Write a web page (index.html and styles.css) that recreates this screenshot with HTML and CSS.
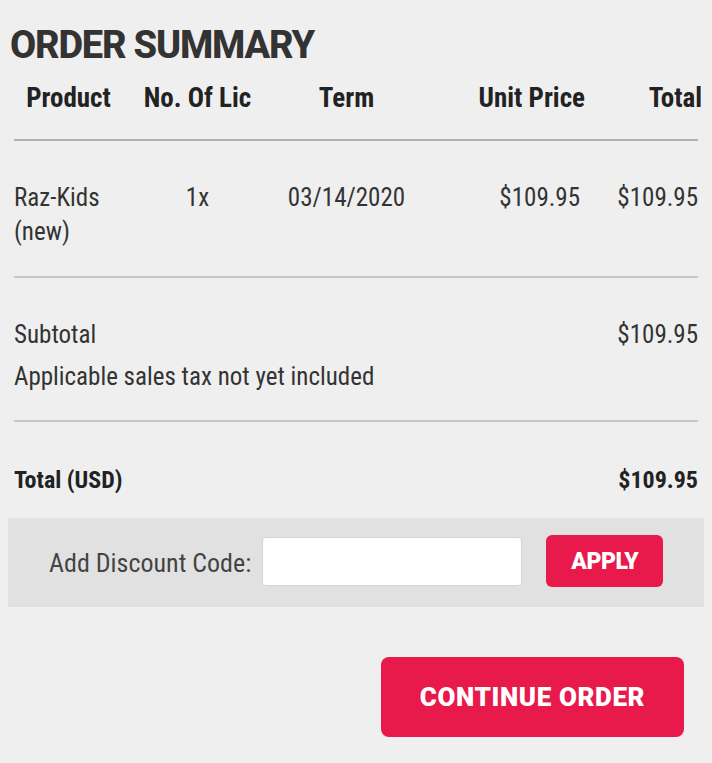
FILE: index.html
```html
<!DOCTYPE html>
<html lang="en">
<head>
<meta charset="utf-8">
<title>Order Summary</title>
<link rel="stylesheet" href="styles.css">
</head>
<body>
<main class="summary">
  <h1 class="title">ORDER SUMMARY</h1>
  <div class="grid head">
    <div class="c1 center">Product</div>
    <div class="c2 center">No. Of Lic</div>
    <div class="c3 center">Term</div>
    <div class="c4 right">Unit Price</div>
    <div class="c5 right total-head">Total</div>
  </div>
  <div class="grid item">
    <div class="c1">Raz-Kids<br>(new)</div>
    <div class="c2 center">1x</div>
    <div class="c3 center">03/14/2020</div>
    <div class="c4 right price">$109.95</div>
    <div class="c5 right">$109.95</div>
  </div>
  <div class="block sub">
    <div class="line"><span>Subtotal</span><span>$109.95</span></div>
    <div class="note">Applicable sales tax not yet included</div>
  </div>
  <div class="block grand">
    <div class="line"><span>Total (USD)</span><span>$109.95</span></div>
  </div>
  <form class="discount">
    <label class="discount-label" for="code">Add Discount Code:</label>
    <input class="discount-input" id="code" type="text">
    <button class="btn btn-apply" type="button">APPLY</button>
  </form>
  <div class="actions">
    <button class="btn btn-continue" type="button">CONTINUE ORDER</button>
  </div>
</main>
</body>
</html>
```
FILE: styles.css
```css
html, body {
  margin: 0;
  padding: 0;
  background: #f0eff0;
}
body {
  font-family: Roboto, "Liberation Sans", sans-serif;
  font-stretch: 75%;
  color: #333;
  font-size: 25px;
  line-height: 34px;
}
.summary {
  padding: 23px 14px 0 14px;
  width: 684px;
}
.title {
  margin: 0 0 16px -4px;
  font-size: 38px;
  line-height: 44px;
  font-weight: 800;
  font-stretch: 100%;
  letter-spacing: -1.2px;
  color: #333;
}
.grid {
  display: grid;
  grid-template-columns: 109px 149px 149px 164px 113px;
}
.head {
  font-size: 27px;
  line-height: 30px;
  font-weight: 700;
  color: #222;
  padding-bottom: 26px;
  border-bottom: 2px solid #b2b1b2;
}
.total-head { margin-right: -4px; }
.item {
  padding: 40px 0 27px;
  border-bottom: 2px solid #c9c8c9;
}
.center { text-align: center; }
.right { text-align: right; }
.price { padding-right: 5px; }
.block { border-bottom: 2px solid #c9c8c9; }
.sub { padding: 40px 0 26px; }
.note { margin-top: 8px; }
.line {
  display: flex;
  justify-content: space-between;
}
.grand {
  padding: 41px 0 21px;
  border-bottom: none;
  font-weight: 700;
  font-size: 24px;
  color: #222;
}
.discount {
  margin: 0 -6px;
  height: 89px;
  background: #e2e1e2;
  display: flex;
  align-items: center;
  padding-left: 41px;
  box-sizing: border-box;
}
.discount-label {
  color: #444;
  font-size: 26px;
  margin-right: 11px;
}
.discount-input {
  width: 260px;
  height: 49px;
  box-sizing: border-box;
  border: 1px solid #d4d4d4;
  border-radius: 4px;
  background: #fff;
  margin: -2px 24px 0 0;
}
.btn {
  border: none;
  background: #e8194b;
  color: #fff;
  font-family: Roboto, "Liberation Sans", sans-serif;
  font-weight: 900;
  font-stretch: 100%;
  cursor: pointer;
  padding: 0;
}
.btn-apply {
  width: 117px;
  height: 52px;
  border-radius: 6px;
  font-size: 23px;
  letter-spacing: -0.5px;
  margin-top: -3px;
}
.actions {
  display: flex;
  justify-content: flex-end;
  padding: 50px 0 0;
  margin-right: 14px;
}
.btn-continue {
  width: 303px;
  height: 80px;
  border-radius: 8px;
  font-size: 26px;
  letter-spacing: 0.6px;
}
```
